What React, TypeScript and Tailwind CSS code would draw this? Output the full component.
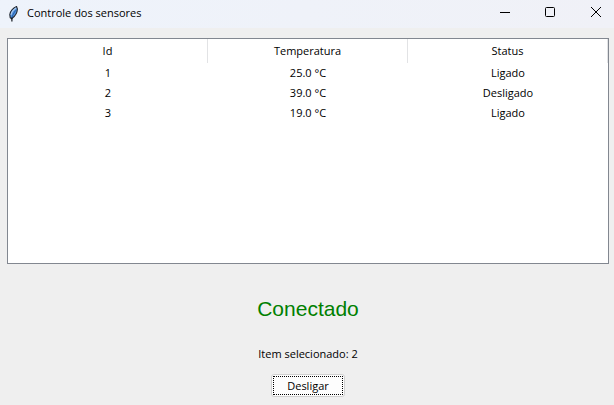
const sensors = [
  { id: 1, temperature: '25.0 °C', status: 'Ligado' },
  { id: 2, temperature: '39.0 °C', status: 'Desligado' },
  { id: 3, temperature: '19.0 °C', status: 'Ligado' },
];

function FeatherIcon() {
  return (
    <svg width="12" height="16" viewBox="0 0 12 16" aria-hidden="true">
      <path d="M8.6 .6C5.4 2 2.4 5.4 1.8 8.6L2.2 11.6L3.6 12.8L4.4 12C7.2 10 9.2 6.6 9.4 3Z" fill="#4f93e0" stroke="#20252c" strokeWidth="1.1" />
      <path d="M8.2 1.8C5.6 3.6 3.6 6 3 8.8" stroke="#b4cdec" strokeWidth="1.1" fill="none" />
      <path d="M7.6 4.4C5.8 7 4.4 9.4 4 12" stroke="#1f4f94" strokeWidth=".8" fill="none" />
      <path d="M3.9 11.5V15.6" stroke="#10151c" strokeWidth="1.2" fill="none" />
    </svg>
  );
}

function TitleBar() {
  return (
    <header className="flex h-7 items-center bg-gradient-to-r from-[#eef3fb] to-[#f0f1f7] pl-2">
      <FeatherIcon />
      <h1 className="ml-[7px] flex-1 pb-[2px]">Controle dos sensores</h1>
      <div className="flex self-start">
        <button aria-label="Minimizar" className="flex h-6 w-[45px] items-center justify-center">
          <svg width="10" height="10" viewBox="0 0 10 10">
            <path d="M0 5.5H10" stroke="#000" />
          </svg>
        </button>
        <button aria-label="Maximizar" className="flex h-6 w-[45px] items-center justify-center">
          <svg width="10" height="10" viewBox="0 0 10 10">
            <rect x=".5" y=".5" width="9" height="9" rx="1" fill="none" stroke="#000" />
          </svg>
        </button>
        <button aria-label="Fechar" className="flex h-6 w-[42px] items-center justify-center pl-[6px]">
          <svg width="10" height="10" viewBox="0 0 10 10">
            <path d="M0 0L10 10M10 0L0 10" stroke="#000" />
          </svg>
        </button>
      </div>
    </header>
  );
}

export default function App() {
  return (
    <div className="flex min-h-screen flex-col bg-[#efefef] font-['Open_Sans','Noto_Sans',sans-serif] text-[11px] leading-4 text-black">
      <TitleBar />
      <main className="flex flex-col items-center pt-[10px] pr-[5px] pb-2 pl-[7px]">
        <div className="min-h-[226px] w-full border border-[#828790] bg-white">
          <table className="w-full table-fixed border-separate border-spacing-0 text-center">
            <thead>
              <tr className="h-6">
                <th className="border-r border-[#e2e3e5] p-0 font-normal">Id</th>
                <th className="border-r border-[#e2e3e5] p-0 font-normal">Temperatura</th>
                <th className="border-r border-[#e2e3e5] p-0 font-normal">Status</th>
              </tr>
            </thead>
            <tbody>
              {sensors.map((sensor) => (
                <tr key={sensor.id} className="h-5">
                  <td className="p-0">{sensor.id}</td>
                  <td className="p-0">{sensor.temperature}</td>
                  <td className="p-0">{sensor.status}</td>
                </tr>
              ))}
            </tbody>
          </table>
        </div>
        <p className="mt-[33px] font-['Liberation_Sans',Arial,sans-serif] text-[21px] leading-6 text-[#008000]">Conectado</p>
        <p className="mt-[23px] leading-5">Item selecionado: 2</p>
        <button className="mt-[10px] h-[23px] w-[74px] rounded-[3px] border border-[#d0d0d0] bg-[#fdfdfd] p-px">
          <span className="flex h-full items-center justify-center border border-dotted border-black">Desligar</span>
        </button>
      </main>
    </div>
  );
}
